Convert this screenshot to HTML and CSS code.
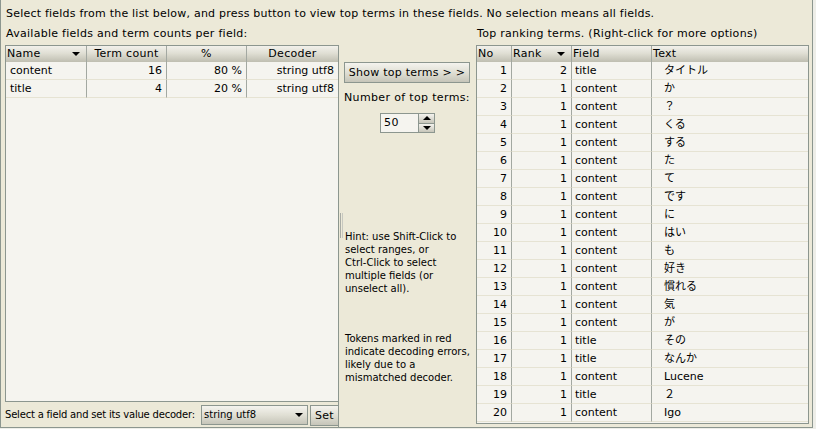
FILE: index.html
```html
<!DOCTYPE html>
<html>
<head>
<meta charset="utf-8">
<link rel="stylesheet" href="styles.css">
</head>
<body>
<div class="app">
  <div class="intro">Select fields from the list below, and press button to view top terms in these fields. No selection means all fields.</div>
  <div class="main">
    <section class="left">
      <div class="label">Available fields and term counts per field:</div>
      <div class="left-body">
        <div class="scroll">
          <div class="row head fields-cols">
            <div class="th sort">Name<span class="tri"></span></div>
            <div class="th center">Term count</div>
            <div class="th center">%</div>
            <div class="th center last">Decoder</div>
          </div>
          <div class="row fields-cols">
            <div class="td">content</div>
            <div class="td num">16</div>
            <div class="td num">80 %</div>
            <div class="td num last">string utf8</div>
          </div>
          <div class="row fields-cols">
            <div class="td">title</div>
            <div class="td num">4</div>
            <div class="td num">20 %</div>
            <div class="td num last">string utf8</div>
          </div>
        </div>
        <div class="decoder-bar">
          <span class="small bar-label">Select a field and set its value decoder:</span>
          <div class="combo"><span>string utf8</span><span class="tri"></span></div>
          <div class="btn set">Set</div>
        </div>
      </div>
    </section>
    <div class="divider"><span class="grip"></span></div>
    <section class="middle">
      <div class="btn show">Show top terms &gt; &gt;</div>
      <div class="ntop">Number of top terms:</div>
      <div class="spinner">
        <div class="spin-field">50</div>
        <div class="spin-btns">
          <div class="spin-btn"><span class="tri up"></span></div>
          <div class="spin-btn"><span class="tri"></span></div>
        </div>
      </div>
      <div class="hint small">Hint: use Shift-Click to<br>select ranges, or<br>Ctrl-Click to select<br>multiple fields (or<br>unselect all).</div>
      <div class="tokens small">Tokens marked in red<br>indicate decoding errors,<br>likely due to a<br>mismatched decoder.</div>
    </section>
    <section class="right">
      <div class="label">Top ranking terms. (Right-click for more options)</div>
      <div class="scroll terms">
        <div class="row head terms-cols">
          <div class="th">No</div>
          <div class="th sort">Rank<span class="tri"></span></div>
          <div class="th">Field</div>
          <div class="th last">Text</div>
        </div>
        <div class="row terms-cols"><div class="td num">1</div><div class="td num">2</div><div class="td fld">title</div><div class="td txt last">タイトル</div></div>
        <div class="row terms-cols"><div class="td num">2</div><div class="td num">1</div><div class="td fld">content</div><div class="td txt last">か</div></div>
        <div class="row terms-cols"><div class="td num">3</div><div class="td num">1</div><div class="td fld">content</div><div class="td txt last">？</div></div>
        <div class="row terms-cols"><div class="td num">4</div><div class="td num">1</div><div class="td fld">content</div><div class="td txt last">くる</div></div>
        <div class="row terms-cols"><div class="td num">5</div><div class="td num">1</div><div class="td fld">content</div><div class="td txt last">する</div></div>
        <div class="row terms-cols"><div class="td num">6</div><div class="td num">1</div><div class="td fld">content</div><div class="td txt last">た</div></div>
        <div class="row terms-cols"><div class="td num">7</div><div class="td num">1</div><div class="td fld">content</div><div class="td txt last">て</div></div>
        <div class="row terms-cols"><div class="td num">8</div><div class="td num">1</div><div class="td fld">content</div><div class="td txt last">です</div></div>
        <div class="row terms-cols"><div class="td num">9</div><div class="td num">1</div><div class="td fld">content</div><div class="td txt last">に</div></div>
        <div class="row terms-cols"><div class="td num">10</div><div class="td num">1</div><div class="td fld">content</div><div class="td txt last">はい</div></div>
        <div class="row terms-cols"><div class="td num">11</div><div class="td num">1</div><div class="td fld">content</div><div class="td txt last">も</div></div>
        <div class="row terms-cols"><div class="td num">12</div><div class="td num">1</div><div class="td fld">content</div><div class="td txt last">好き</div></div>
        <div class="row terms-cols"><div class="td num">13</div><div class="td num">1</div><div class="td fld">content</div><div class="td txt last">慣れる</div></div>
        <div class="row terms-cols"><div class="td num">14</div><div class="td num">1</div><div class="td fld">content</div><div class="td txt last">気</div></div>
        <div class="row terms-cols"><div class="td num">15</div><div class="td num">1</div><div class="td fld">content</div><div class="td txt last">が</div></div>
        <div class="row terms-cols"><div class="td num">16</div><div class="td num">1</div><div class="td fld">title</div><div class="td txt last">その</div></div>
        <div class="row terms-cols"><div class="td num">17</div><div class="td num">1</div><div class="td fld">title</div><div class="td txt last">なんか</div></div>
        <div class="row terms-cols"><div class="td num">18</div><div class="td num">1</div><div class="td fld">content</div><div class="td txt last">Lucene</div></div>
        <div class="row terms-cols"><div class="td num">19</div><div class="td num">1</div><div class="td fld">title</div><div class="td txt last">２</div></div>
        <div class="row terms-cols"><div class="td num">20</div><div class="td num">1</div><div class="td fld">content</div><div class="td txt last">Igo</div></div>
      </div>
    </section>
  </div>
</div>
</body>
</html>
```

FILE: styles.css
```css
* { box-sizing: border-box; }
html, body { margin: 0; padding: 0; }
body {
  width: 816px;
  height: 429px;
  overflow: hidden;
  background: #eeeee8;
  font-family: "DejaVu Sans", "Noto Sans CJK JP", sans-serif;
  font-size: 11px;
  color: #000;
}
.app {
  width: 813px;
  height: 428px;
  background: #ece9d8;
  border: 1px solid #8c968f;
  border-top: none;
  display: flex;
  flex-direction: column;
}
.intro {
  height: 27px;
  padding: 7px 0 0 5px;
  line-height: 14px;
  letter-spacing: 0.22px;
  white-space: nowrap;
}
.main {
  flex: 1;
  display: flex;
  padding: 0 3px 0 4px;
}
.label {
  height: 14px;
  line-height: 14px;
  margin-bottom: 4px;
  padding-left: 1px;
  letter-spacing: 0.28px;
  white-space: nowrap;
}
.small { font-size: 10px; }

/* left */
.left {
  width: 334px;
  display: flex;
  flex-direction: column;
}
.left-body {
  flex: 1;
  display: flex;
  flex-direction: column;
  border-right: 1px solid #8c968f;
}
.scroll {
  background: #f5f4ef;
  border: 1px solid #8c968f;
}
.left .scroll {
  height: 357px;
  border-right: none;
}
.row {
  display: grid;
  height: 18px;
}
.fields-cols { grid-template-columns: 81px 80px 80px 91px; }
.terms-cols { grid-template-columns: 35px 60px 80px 156px; }
.row.head { height: 16px; }
.th {
  background: linear-gradient(#f2f1eb, #e0dfd4 45%, #bfbeb1);
  border-right: 1px solid #a3a8a1;
  line-height: 16px;
  padding-left: 1px;
  letter-spacing: 0.3px;
  white-space: nowrap;
  display: flex;
  align-items: center;
}
.th.center { justify-content: center; padding-left: 0; }
.th.last { border-right: none; }
.th.sort { justify-content: space-between; padding-right: 6px; }
.tri {
  width: 0;
  height: 0;
  border-left: 4px solid transparent;
  border-right: 4px solid transparent;
  border-top: 4px solid #000;
}
.tri.up {
  border-top: none;
  border-bottom: 4px solid #000;
}
.td {
  border-right: 1px solid #a3a8a1;
  border-bottom: 1px solid #e6e3d3;
  line-height: 17px;
  padding: 0 4px;
  white-space: nowrap;
}
.td.last { border-right: none; }
.td.num { text-align: right; }
.td.fld { padding-left: 3px; }
.td.txt { padding-left: 12px; }

.decoder-bar {
  flex: 1;
  display: flex;
  align-items: flex-start;
  padding-top: 3px;
}
.bar-label {
  line-height: 20px;
  width: 196px;
  letter-spacing: -0.2px;
  white-space: nowrap;
}
.combo {
  width: 107px;
  height: 20px;
  border: 1px solid #8c968f;
  background: linear-gradient(#f4f3ee, #e0dfd4 50%, #c6c5b9);
  display: flex;
  align-items: center;
  justify-content: space-between;
  padding: 0 4px 0 2px;
  line-height: 18px;
  font-size: 10px;
}
.btn {
  border: 1px solid #8c968f;
  background: linear-gradient(#f4f3ee, #e0dfd4 50%, #c6c5b9);
  display: flex;
  align-items: center;
  justify-content: center;
  white-space: nowrap;
}
.btn.set {
  margin-left: 2px;
  width: 28px;
  height: 21px;
  border-right: none;
  letter-spacing: 0.3px;
}

/* divider */
.divider {
  width: 4px;
  padding-top: 186px;
}
.grip {
  display: block;
  margin-left: 1px;
  width: 3px;
  height: 25px;
  border-left: 1px solid #a9aca6;
  border-right: 1px solid #c7c8c0;
}

/* middle */
.middle {
  flex: 1;
  display: flex;
  flex-direction: column;
  align-items: flex-start;
  padding-top: 35px;
}
.btn.show {
  margin-left: 1px;
  width: 126px;
  height: 21px;
  letter-spacing: 0.25px;
}
.ntop {
  margin-top: 8px;
  margin-left: 1px;
  line-height: 14px;
  letter-spacing: 0.35px;
  white-space: nowrap;
}
.spinner {
  margin-top: 8px;
  margin-left: 37px;
  display: flex;
  height: 20px;
}
.spin-field {
  width: 39px;
  height: 20px;
  border: 1px solid #8c968f;
  background: #f5f4ef;
  padding-left: 3px;
  line-height: 18px;
  letter-spacing: 0.5px;
}
.spin-btns {
  width: 16px;
  display: flex;
  flex-direction: column;
  border: 1px solid #8c968f;
  border-left: none;
}
.spin-btn {
  flex: 1;
  display: flex;
  align-items: center;
  justify-content: center;
  background: linear-gradient(#f4f3ee, #c6c5b9);
}
.spin-btn + .spin-btn { border-top: 1px solid #8c968f; }
.hint {
  margin-top: 97px;
  margin-left: 2px;
  line-height: 13px;
  white-space: nowrap;
}
.tokens {
  margin-top: 37px;
  margin-left: 2px;
  line-height: 13px;
  white-space: nowrap;
}

/* right */
.right {
  width: 333px;
  display: flex;
  flex-direction: column;
}
.right .scroll {
  height: 379px;
}
```
